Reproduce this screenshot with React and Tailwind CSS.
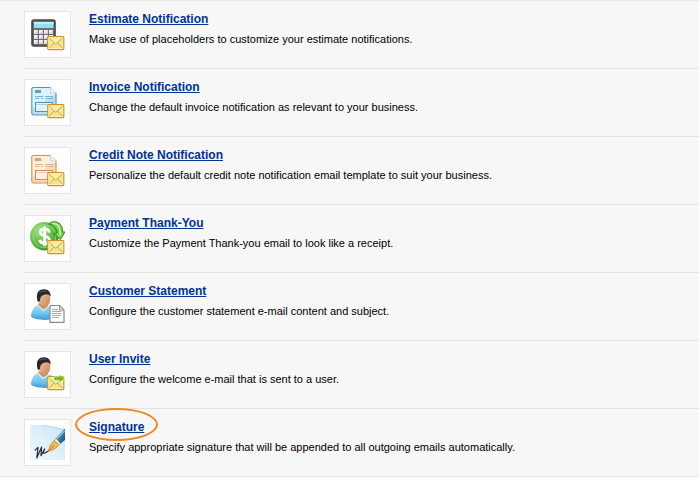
import React from 'react';

const Envelope = ({ arrow }) => (
  <g>
    <rect x="17.8" y="19.6" width="16" height="13" rx="1" fill="#f8e48b" stroke="#cf902c" strokeWidth="1.2" />
    <rect x="18.9" y="20.7" width="13.8" height="10.8" fill="none" stroke="#fff6c6" strokeWidth="0.8" />
    <path d="M19.3 31 L24.3 25.8 M32.3 31 L27.3 25.8" fill="none" stroke="#c9a545" strokeWidth="0.9" />
    <path d="M19.2 21 L25.8 27.4 L32.4 21" fill="#fbeea5" stroke="#bf9b3a" strokeWidth="0.9" />
    {arrow && <path d="M24 19.6 H29.4 V17.6 L35 21.6 L29.4 25.6 V23.6 H24 Z" fill="#74bd18" stroke="#ffffff" strokeWidth="0.5" />}
  </g>
);

const CalculatorIcon = () => (
  <>
    <rect x="2" y="3" width="23" height="26" rx="2" fill="#6d6d6f" stroke="#454547" strokeWidth="1.6" />
    <rect x="4" y="5" width="19.5" height="6" fill="#8de4f2" />
    <path d="M4 6 H23.5" stroke="#c5f6fb" strokeWidth="1.6" />
    {[13, 18, 23].map((y) =>
      [4, 9, 14, 19].map((x) => (
        <g key={`${x}-${y}`}>
          <rect x={x} y={y} width="4" height="4" fill="#f4f4f4" />
          <path d={`M${x} ${y + 4} L${x + 4} ${y} V${y + 4} Z`} fill="#d4d4d6" />
        </g>
      ))
    )}
    <Envelope />
  </>
);

const DocumentIcon = ({ line, fill, shade, mark }) => (
  <>
    <path d="M3 2.5 H20.5 L26 8 V28 Q26 30 24 30 H3.5 Q1.8 30 1.8 28 V4 Q1.8 2.5 3 2.5 Z" fill={fill} />
    <path d="M2.5 24 L26 9 V29.5 H2.5 Z" fill={shade} />
    <path d="M20.5 2.5 H3.3 Q1.8 2.5 1.8 4 V28 Q1.8 30 3.5 30 H24 Q26 30 26 28 V8" fill="none" stroke={line} strokeWidth="1.1" />
    <path d="M20.5 2.5 V8 H26.3 Z" fill="#f3f3f3" stroke="#c6c6c6" strokeWidth="0.8" />
    <rect x="5" y="5" width="6" height="3" fill={mark} />
    <path d="M5 11.5 H13 M15 11.5 H23 M5 13.5 H9 M11 13.5 H13 M15 13.5 H23" stroke={mark} strokeWidth="0.8" />
    <rect x="5.5" y="17.5" width="17" height="9" fill="#ffffff" fillOpacity="0.6" stroke={line} strokeWidth="1" />
    <path d="M6 19.5 H22.5" stroke={line} strokeWidth="0.7" opacity="0.5" />
    <Envelope />
  </>
);

const InvoiceIcon = () => <DocumentIcon line="#4e93b8" fill="#ddf2fa" shade="#b7def0" mark="#5da4c3" />;

const CreditNoteIcon = () => <DocumentIcon line="#d98b4e" fill="#fff0df" shade="#fbd9b8" mark="#e5a067" />;

const PaymentIcon = () => (
  <>
    <defs>
      <radialGradient id="coin" cx="0.35" cy="0.3" r="0.8">
        <stop offset="0" stopColor="#a8e28e" />
        <stop offset="0.6" stopColor="#5bbb3c" />
        <stop offset="1" stopColor="#2c8c1c" />
      </radialGradient>
    </defs>
    <circle cx="14.3" cy="15.2" r="14.2" fill="url(#coin)" />
    <circle cx="14.3" cy="15.2" r="11.5" fill="none" stroke="#9ddc83" strokeWidth="0.8" />
    <path d="M19.3 11.5 Q18.5 7.8 14.8 8 Q10.3 8.2 10.4 11.4 Q10.6 14 14.8 15 Q19.6 16.2 19.3 19.2 Q18.8 22.6 14.7 22.5 Q10.5 22.3 9.7 18.9 M14.7 5.2 V25.2" fill="none" stroke="#ffffff" strokeWidth="2.8" />
    <path d="M18.5 2.8 Q24 -1 29 2 Q32.8 5 32.8 11 L35 11 L30.3 18.6 L23.6 12.6 L27.2 12 Q26.8 5 18.5 2.8 Z" fill="#7bcf4c" stroke="#2f8d20" strokeWidth="1" />
    <path d="M22.5 2.2 Q29.8 2.5 30 10 V14.5" fill="none" stroke="#cdf3b0" strokeWidth="1.5" />
    <Envelope />
  </>
);

const Person = () => (
  <g>
    <defs>
      <linearGradient id="shirt" x1="0" y1="0" x2="0" y2="1">
        <stop offset="0" stopColor="#a5def8" />
        <stop offset="0.6" stopColor="#6cc4f0" />
        <stop offset="1" stopColor="#3a9bd6" />
      </linearGradient>
      <linearGradient id="skin" x1="0" y1="0" x2="1" y2="1">
        <stop offset="0" stopColor="#f6c7a2" />
        <stop offset="1" stopColor="#cb8358" />
      </linearGradient>
    </defs>
    <path d="M8.5 15.5 L18 17 Q24 18.5 26 23 V29.5 Q18 31.5 10 30.6 Q3.5 30 1 27.4 Q1.2 19 8.5 15.5 Z" fill="url(#shirt)" />
    <path d="M8.7 14 L8.2 17 Q12 21.2 17 20 L18 15.5 Z" fill="#d59067" />
    <path d="M7.5 15.8 L13 21.5 L19.5 17.3" fill="none" stroke="#d0f1ff" strokeWidth="1.2" />
    <path d="M8.5 7 Q9 1.6 14.8 1.8 Q20.4 2.2 20.3 9.2 Q20 17.4 15.2 17.6 Q10 17.2 8.5 11 Z" fill="url(#skin)" />
    <path d="M7.5 12 Q4.8 0.4 14.2 0.2 Q20.8 0.6 20.6 7.6 Q18.4 3.8 13.4 6 Q10.2 7.2 9.9 12 L8.6 13 Z" fill="#25282c" />
    <path d="M9.5 3.3 Q12.4 1 16.2 2.5" fill="none" stroke="#686c70" strokeWidth="0.8" />
  </g>
);

const StatementIcon = () => (
  <>
    <Person />
    <path d="M20 16.5 H29.5 L34 21 V33.3 H20 Z" fill="#ffffff" stroke="#8a8a8a" strokeWidth="1.2" />
    <path d="M29.5 16.5 V21 H34 Z" fill="#dddddd" stroke="#8a8a8a" strokeWidth="0.9" />
    <path d="M22 20.5 H28 M22 22.5 H31.5 M22 24.5 H31.5 M22 26.5 H31.5 M22 28.5 H29" stroke="#a8a8a8" strokeWidth="1" />
  </>
);

const InviteIcon = () => (
  <>
    <Person />
    <Envelope arrow />
  </>
);

const SignatureIcon = () => (
  <>
    <defs>
      <linearGradient id="paper" x1="0" y1="1" x2="1" y2="0">
        <stop offset="0" stopColor="#f1f9fe" />
        <stop offset="1" stopColor="#cbe7f6" />
      </linearGradient>
      <linearGradient id="pen" x1="0" y1="0" x2="1" y2="1">
        <stop offset="0" stopColor="#b4dcf0" />
        <stop offset="0.45" stopColor="#3f8dbb" />
        <stop offset="1" stopColor="#123f66" />
      </linearGradient>
    </defs>
    <rect width="35" height="35" fill="url(#paper)" />
    <path d="M11 0 Q25 1.5 35 5 V0 Z" fill="#ffffff" />
    <path d="M11 0 Q25 1.5 35 5" fill="none" stroke="#a6d1e7" strokeWidth="0.8" />
    <path d="M35 3.5 L25.5 13.5 L30 19 L35 15 Z" fill="url(#pen)" />
    <path d="M34.5 6 L27.2 13.4" stroke="#d7f1fb" strokeWidth="1" />
    <path d="M26 13.2 L30.3 18.4 L28.6 20 L24.3 15.3 Z" fill="#f4f0df" stroke="#b4935a" strokeWidth="0.6" />
    <path d="M24.3 15.6 L28.6 20 Q26 24.3 18 26.5 Q19.6 19.6 24.3 15.6 Z" fill="#f5bd50" stroke="#c17d23" strokeWidth="0.8" />
    <path d="M18.5 26 L24 20.5" stroke="#8a5417" strokeWidth="0.7" />
    <path d="M5.2 25.2 L8 22.4 L6.8 33 L11.6 22 L11 30.6 L14.6 24 Q12.6 28.8 14.6 28.2 L17.6 26.4" fill="none" stroke="#292a30" strokeWidth="1.2" strokeLinejoin="round" strokeLinecap="round" />
  </>
);

const templates = [
  { title: 'Estimate Notification', text: 'Make use of placeholders to customize your estimate notifications.', Icon: CalculatorIcon },
  { title: 'Invoice Notification', text: 'Change the default invoice notification as relevant to your business.', Icon: InvoiceIcon },
  { title: 'Credit Note Notification', text: 'Personalize the default credit note notification email template to suit your business.', Icon: CreditNoteIcon },
  { title: 'Payment Thank-You', text: 'Customize the Payment Thank-you email to look like a receipt.', Icon: PaymentIcon },
  { title: 'Customer Statement', text: 'Configure the customer statement e-mail content and subject.', Icon: StatementIcon },
  { title: 'User Invite', text: 'Configure the welcome e-mail that is sent to a user.', Icon: InviteIcon },
  { title: 'Signature', text: 'Specify appropriate signature that will be appended to all outgoing emails automatically.', Icon: SignatureIcon, circled: true },
];

const TemplateRow = ({ title, text, Icon, circled }) => (
  <li className="flex gap-[18px] py-[10px] border-b border-[#e3e3e3] last:border-b-0">
    <div className="shrink-0 p-[5px] bg-white border border-[#e5e5e5]">
      <svg className="block w-[35px] h-[35px]" viewBox="0 0 35 35" aria-hidden="true">
        <Icon />
      </svg>
    </div>
    <div className="flex flex-col items-start gap-1">
      <h2 className="relative text-[12px] leading-4 font-bold">
        <a href="#" className="text-[#003399] underline">{title}</a>
        {circled && (
          <span className="absolute -inset-x-[14px] -top-[11px] h-[33px] rounded-[50%] border-2 border-[#ee8a20] pointer-events-none" />
        )}
      </h2>
      <p className="text-[11px] leading-4 text-black">{text}</p>
    </div>
  </li>
);

const App = () => {
  return (
    <main className="min-h-screen bg-[#f7f7f7] font-['Liberation_Sans',Arial,sans-serif]">
      <ul className="pl-6 border-y border-[#e8e8e8]">
        {templates.map((template) => (
          <TemplateRow key={template.title} {...template} />
        ))}
      </ul>
    </main>
  );
};

export default App;
